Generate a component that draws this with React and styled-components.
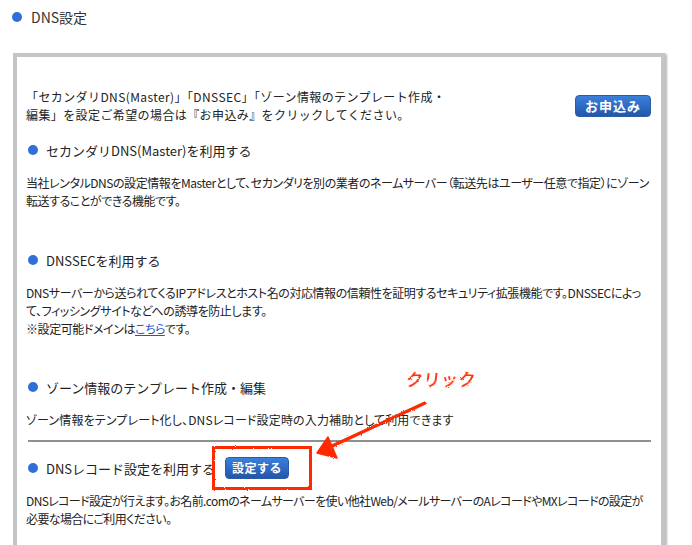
import React from 'react';
import styled, { createGlobalStyle } from 'styled-components';

const Global = createGlobalStyle`
  html, body { margin: 0; padding: 0; background: #fff; }
  body {
    font-family: "Noto Sans CJK JP", "Noto Sans", "Liberation Sans", sans-serif;
    color: #222;
  }
`;

const Page = styled.div`
  position: relative;
  width: 692px;
  height: 545px;
  overflow: hidden;
  padding-top: 7px;
  box-sizing: border-box;
`;

const TitleRow = styled.div`
  display: flex;
  align-items: center;
  gap: 9px;
  padding-left: 12px;
  height: 20px;
  font-size: 14px;
  color: #333;
`;

const Dot = styled.span`
  flex: none;
  width: 10px;
  height: 10px;
  border-radius: 50%;
  background: #2f6fd8;
`;

const Panel = styled.div`
  box-sizing: border-box;
  margin: 26px 0 0 13px;
  width: 652px;
  min-height: 560px;
  border: 4px solid #c3c6c8;
  border-bottom: none;
  box-shadow: 2px 1px 2px rgba(0, 0, 0, 0.28);
  padding: 31px 10px 40px 9px;
`;

const Intro = styled.div`
  display: flex;
  align-items: center;
  justify-content: space-between;
  font-size: 12px;
  line-height: 18px;
  white-space: nowrap;
  letter-spacing: 0.4px;
`;

const Heading = styled.div`
  display: flex;
  align-items: center;
  gap: 8px;
  height: 22px;
  padding-left: 2px;
  margin-top: ${(p) => p.$mt}px;
  font-size: 13px;
  color: #222;
`;

const Body = styled.p`
  margin: 13px 0 0;
  font-size: 12px;
  line-height: 18px;
  white-space: nowrap;
  color: #222;
  font-feature-settings: "palt" 1;
  letter-spacing: ${(p) => p.$ls}px;
`;

const Link = styled.a`
  color: #1f55c8;
  text-decoration: underline;
`;

const Rule = styled.div`
  height: 2px;
  background: #8e9092;
  margin: 11px 0 0 2px;
`;

const Button = styled.button`
  flex: none;
  height: 22px;
  padding: 0 ${(p) => p.$px}px;
  border-radius: 4px;
  border: 1px solid #2a5aa8;
  background: linear-gradient(#3c7fdb, #2357a8);
  color: #fff;
  font-family: inherit;
  font-weight: 700;
  font-size: ${(p) => p.$fs}px;
  letter-spacing: ${(p) => p.$ls}px;
  line-height: 20px;
  cursor: pointer;
`;

const Marked = styled.span`
  position: relative;
  display: inline-flex;
  margin-left: 2px;
`;

const RedFrame = styled.span`
  position: absolute;
  left: -13px;
  top: -11px;
  right: -23px;
  bottom: -11px;
  border: 3px solid #ff2a00;
  filter: url(#rough);
  pointer-events: none;
`;

const Overlay = styled.svg`
  position: absolute;
  left: 0;
  top: 0;
  pointer-events: none;
`;

const ClickNote = styled.span`
  position: absolute;
  left: 406px;
  top: 366px;
  font-size: 17px;
  letter-spacing: 0.5px;
  color: #ff2a00;
  font-family: "Noto Sans CJK JP", sans-serif;
  font-weight: 500;
  transform: skewX(-6deg);
  filter: url(#rough);
`;

export default function App() {
  return (
    <Page>
      <Global />
      <svg width="0" height="0" style={{ position: 'absolute' }}>
        <defs>
          <filter id="rough" x="-10%" y="-10%" width="120%" height="120%">
            <feTurbulence type="fractalNoise" baseFrequency="0.9" numOctaves="2" seed="3" />
            <feDisplacementMap in="SourceGraphic" scale="2.2" />
          </filter>
        </defs>
      </svg>

      <TitleRow>
        <Dot />
        DNS設定
      </TitleRow>

      <Panel>
        <Intro>
          <div>
            「セカンダリDNS(Master)」「DNSSEC」「ゾーン情報のテンプレート作成・
            <br />
            編集」を設定ご希望の場合は『お申込み』をクリックしてください。
          </div>
          <Button $px={9} $fs={13} $ls={1}>お申込み</Button>
        </Intro>

        <Heading $mt={15}>
          <Dot />
          セカンダリDNS(Master)を利用する
        </Heading>
        <Body $ls={-0.45}>
          当社レンタルDNSの設定情報をMasterとして、セカンダリを別の業者のネームサーバー（転送先はユーザー任意で指定）にゾーン
          <br />
          転送することができる機能です。
        </Body>

        <Heading $mt={39}>
          <Dot />
          DNSSECを利用する
        </Heading>
        <Body $ls={-0.42}>
          DNSサーバーから送られてくるIPアドレスとホスト名の対応情報の信頼性を証明するセキュリティ拡張機能です。DNSSECによっ
          <br />
          て、フィッシングサイトなどへの誘導を防止します。
          <br />
          ※設定可能ドメインは<Link href="#">こちら</Link>です。
        </Body>

        <Heading $mt={38}>
          <Dot />
          ゾーン情報のテンプレート作成・編集
        </Heading>
        <Body $ls={0.15}>ゾーン情報をテンプレート化し、DNSレコード設定時の入力補助として利用できます</Body>
        <Rule />

        <Heading $mt={15}>
          <Dot />
          DNSレコード設定を利用する
          <Marked>
            <Button $px={6} $fs={12} $ls={0.5}>設定する</Button>
            <RedFrame />
          </Marked>
        </Heading>
        <Body $ls={-0.62}>
          DNSレコード設定が行えます。お名前.comのネームサーバーを使い他社Web/メールサーバーのAレコードやMXレコードの設定が
          <br />
          必要な場合にご利用ください。
        </Body>
      </Panel>

      <ClickNote>クリック</ClickNote>
      <Overlay width="692" height="545" viewBox="0 0 692 545">
        <g filter="url(#rough)" fill="#ff2a00" stroke="#ff2a00">
          <line x1="425" y1="403" x2="330" y2="447" strokeWidth="3.5" strokeLinecap="round" />
          <polygon points="317,453 328,437 337,458" strokeWidth="1.5" strokeLinejoin="round" />
        </g>
      </Overlay>
    </Page>
  );
}
